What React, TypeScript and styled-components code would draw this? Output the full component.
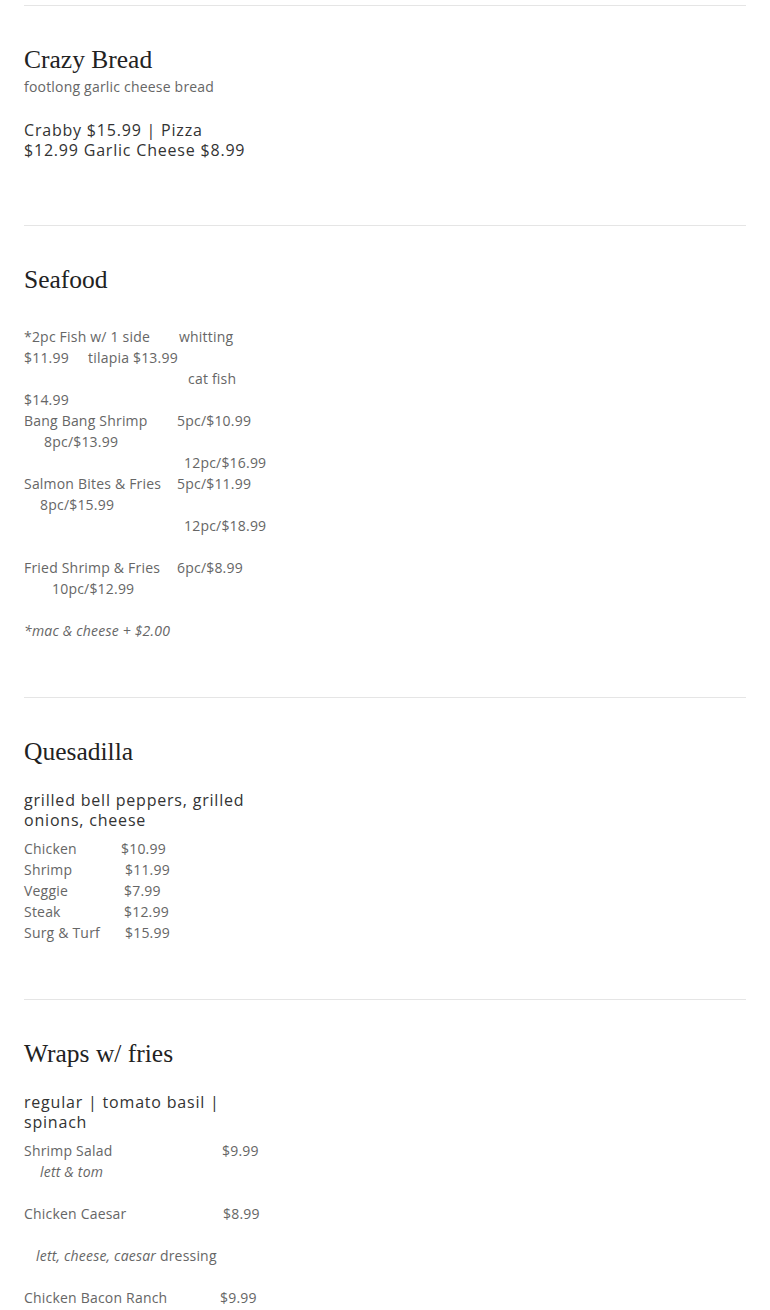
import styled, { createGlobalStyle } from "styled-components";

const GlobalStyle = createGlobalStyle`
  body {
    margin: 0;
    background: #fff;
    font-family: "Open Sans", "Liberation Sans", sans-serif;
  }
`;

const Page = styled.div`
  padding: 5px 24px 0;
`;

const Section = styled.section`
  border-top: 1px solid #e5e5e5;
  padding: 39px 0 56px;
`;

const Title = styled.h2`
  margin: 0;
  font-family: "Liberation Serif", "Times New Roman", serif;
  font-weight: 400;
  font-size: 25.5px;
  line-height: 30px;
  color: #222;
`;

const Desc = styled.p`
  margin: 1px 0 0;
  font-size: 14px;
  line-height: 21px;
  letter-spacing: 0.2px;
  color: #666;
`;

const Sub = styled.p<{ $after?: number }>`
  margin: 23px 0 ${(p) => p.$after ?? 8}px;
  max-width: 228px;
  font-size: 16px;
  line-height: 20px;
  letter-spacing: 0.8px;
  color: #333;
`;

const Body = styled.div<{ $top?: number }>`
  margin-top: ${(p) => p.$top ?? 0}px;
  font-size: 14px;
  line-height: 21px;
  letter-spacing: 0.2px;
  color: #666;
`;

const Line = styled.div<{ $indent?: number }>`
  min-height: 21px;
  padding-left: ${(p) => p.$indent ?? 0}px;
  white-space: nowrap;
`;

const Row = styled.div<{ $label: number }>`
  display: flex;
  white-space: nowrap;
  & > span:first-child {
    width: ${(p) => p.$label}px;
    flex: none;
  }
`;

const Em = styled.em`
  font-style: italic;
`;

type Item = [string, number, string];

const quesadillas: Item[] = [
  ["Chicken", 97, "$10.99"],
  ["Shrimp", 101, "$11.99"],
  ["Veggie", 100, "$7.99"],
  ["Steak", 100, "$12.99"],
  ["Surg & Turf", 101, "$15.99"],
];

function PriceRow({ item }: { item: Item }) {
  const [name, w, price] = item;
  return (
    <Row $label={w}>
      <span>{name}</span>
      <span>{price}</span>
    </Row>
  );
}

export default function App() {
  return (
    <>
      <GlobalStyle />
      <Page>
        <Section>
          <Title>Crazy Bread</Title>
          <Desc>footlong garlic cheese bread</Desc>
          <Sub $after={9}>Crabby $15.99 | Pizza $12.99 Garlic Cheese $8.99</Sub>
        </Section>

        <Section>
          <Title>Seafood</Title>
          <Body $top={30.5}>
            <PriceRow item={["*2pc Fish w/ 1 side", 155, "whitting"]} />
            <PriceRow item={["$11.99", 64, "tilapia $13.99"]} />
            <Line $indent={164}>cat fish</Line>
            <Line>$14.99</Line>
            <PriceRow item={["Bang Bang Shrimp", 153, "5pc/$10.99"]} />
            <Line $indent={20}>8pc/$13.99</Line>
            <Line $indent={160}>12pc/$16.99</Line>
            <PriceRow item={["Salmon Bites & Fries", 153, "5pc/$11.99"]} />
            <Line $indent={16}>8pc/$15.99</Line>
            <Line $indent={160}>12pc/$18.99</Line>
            <Line />
            <PriceRow item={["Fried Shrimp & Fries", 153, "6pc/$8.99"]} />
            <Line $indent={28}>10pc/$12.99</Line>
            <Line />
            <Line>
              <Em>*mac &amp; cheese + $2.00</Em>
            </Line>
          </Body>
        </Section>

        <Section>
          <Title>Quesadilla</Title>
          <Sub>grilled bell peppers, grilled onions, cheese</Sub>
          <Body>
            {quesadillas.map((q) => (
              <PriceRow key={q[0]} item={q} />
            ))}
          </Body>
        </Section>

        <Section>
          <Title>Wraps w/ fries</Title>
          <Sub>regular | tomato basil | spinach</Sub>
          <Body>
            <PriceRow item={["Shrimp Salad", 198, "$9.99"]} />
            <Line $indent={16}>
              <Em>lett &amp; tom</Em>
            </Line>
            <Line />
            <PriceRow item={["Chicken Caesar", 199, "$8.99"]} />
            <Line />
            <Line $indent={12}>
              <Em>lett, cheese, caesar</Em> dressing
            </Line>
            <Line />
            <PriceRow item={["Chicken Bacon Ranch", 196, "$9.99"]} />
            <Line $indent={16}>
              <Em>lett, tom, bacon, ranch</Em>
            </Line>
          </Body>
        </Section>
      </Page>
    </>
  );
}
